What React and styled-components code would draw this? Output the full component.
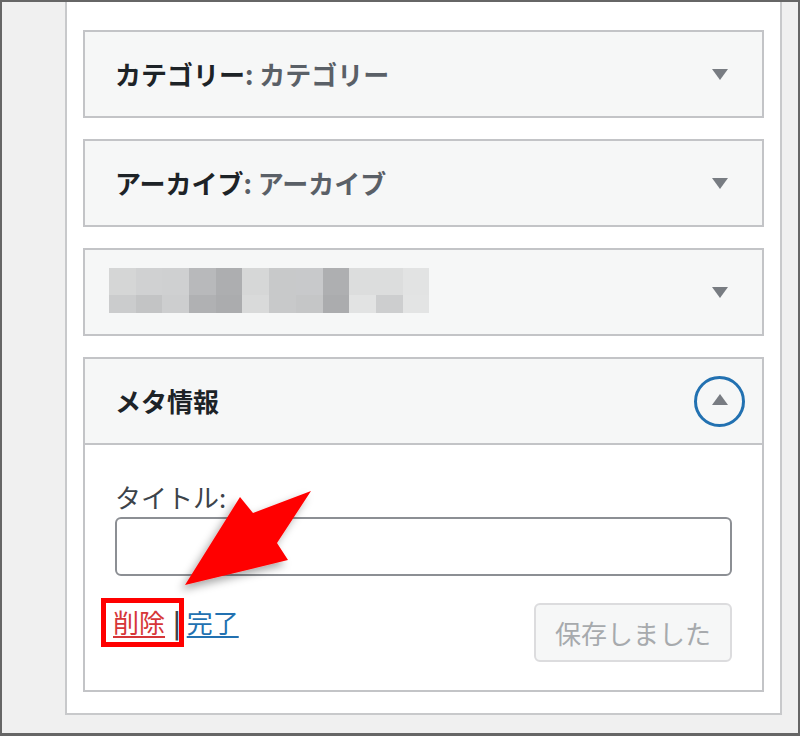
import styled, { createGlobalStyle } from "styled-components"

const Global = createGlobalStyle`
    html, body {
        margin: 0;
        padding: 0;
        background: #f0f0f0;
    }
    * {
        box-sizing: border-box;
    }
`

const blur = [
    ["#d5d6d6", "#d0d1d2", "#cfd0d1", "#b8b9bb", "#adaeb0", "#d6d7d7", "#c8c9ca", "#c8c9cb", "#aeafb1", "#dcdddd", "#dcdddd", "#e2e3e3"],
    ["#cbcccd", "#c3c4c5", "#cdcecf", "#b0b1b3", "#abacae", "#d9dada", "#c8c9ca", "#c5c6c7", "#abacae", "#e2e3e3", "#cdcecf", "#e3e4e4"],
]

function Widget ({ title, inTitle, children }) {
    return (
        <WidgetBox>
            <WidgetTop>
                {children || (
                    <Title>
                        {title}
                        <InTitle>{inTitle}</InTitle>
                    </Title>
                )}
                <Toggle>
                    <Arrow />
                </Toggle>
            </WidgetTop>
        </WidgetBox>
    )
}

export default function App () {
    return (
        <Frame>
            <Global />
            <Panel>
                <Widget title="カテゴリー" inTitle=": カテゴリー" />
                <Widget title="アーカイブ" inTitle=": アーカイブ" />
                <Widget>
                    <Mosaic>
                        {blur.flat().map((c, i) => (
                            <Cell key={i} $c={c} />
                        ))}
                    </Mosaic>
                </Widget>
                <WidgetBox $last>
                    <WidgetTop>
                        <Title>メタ情報</Title>
                        <Toggle $open>
                            <Arrow $up />
                        </Toggle>
                    </WidgetTop>
                    <WidgetInside>
                        <Label>タイトル:</Label>
                        <Input type="text" />
                        <Actions>
                            <Links>
                                <Delete href="#">削除</Delete>
                                <Sep>|</Sep>
                                <Done href="#">完了</Done>
                            </Links>
                            <SaveButton disabled>保存しました</SaveButton>
                        </Actions>
                    </WidgetInside>
                </WidgetBox>
            </Panel>
            <Highlight />
            <Pointer viewBox="0 0 800 736" width="800" height="736">
                <defs>
                    <filter id="sh" x="-30%" y="-30%" width="160%" height="160%">
                        <feDropShadow dx="-4" dy="5" stdDeviation="4" floodColor="#000" floodOpacity="0.35" />
                    </filter>
                </defs>
                <polygon
                    points="311,491 277,543 288,560 185,585 240,497 253,513"
                    fill="#ff0000"
                    filter="url(#sh)"
                />
            </Pointer>
        </Frame>
    )
}

const Frame = styled.div`
    position: relative;
    width: 800px;
    height: 736px;
    overflow: hidden;
    background: #f0f0f0;
    border: 2px solid #666;
    border-bottom-width: 3px;
    font-family: "Noto Sans CJK JP", "Noto Sans", sans-serif;
`

const Panel = styled.div`
    margin-left: 63px;
    width: 717px;
    height: 713px;
    background: #fff;
    border: 2px solid #c8c9cb;
    border-top: none;
    padding: 28px 16px 0;
`

const WidgetBox = styled.div`
    margin-bottom: ${p => (p.$last ? "0" : "21px")};
`

const WidgetTop = styled.div`
    height: 88px;
    display: flex;
    align-items: center;
    justify-content: space-between;
    padding: 0 17px 0 24px;
    background: #f6f7f7;
    border: 2px solid #c3c4c7;
`

const Title = styled.h3`
    margin: 0 0 0 6px;
    font-size: 26px;
    font-weight: 700;
    line-height: 36px;
    color: #1d2327;
`

const InTitle = styled.span`
    font-weight: 700;
    color: #5a6067;
`

const Toggle = styled.div`
    width: 51px;
    height: 51px;
    border-radius: 50%;
    display: flex;
    align-items: center;
    justify-content: center;
    border: 3px solid ${p => (p.$open ? "#2271b1" : "transparent")};
`

const Arrow = styled.span`
    width: 0;
    height: 0;
    border-left: 8px solid transparent;
    border-right: 8px solid transparent;
    ${p => (p.$up
        ? "border-bottom: 11px solid #787c82; margin-top: -3px;"
        : "border-top: 11px solid #787c82; margin-top: 1px;")}
`

const Mosaic = styled.div`
    display: grid;
    grid-template-columns: repeat(12, 26.7px);
    grid-template-rows: 27px 18px;
    margin-top: -4px;
`

const Cell = styled.div`
    background: ${p => p.$c};
`

const WidgetInside = styled.div`
    padding: 34px 30px 28px;
    border: 2px solid #c3c4c7;
    border-top: none;
`

const Label = styled.label`
    display: block;
    font-size: 26px;
    line-height: 35px;
    color: #3c434a;
`

const Input = styled.input`
    display: block;
    width: 100%;
    height: 59px;
    margin-top: 3px;
    border: 2px solid #8c8f94;
    border-radius: 6px;
    background: #fff;
    outline: none;
`

const Actions = styled.div`
    display: flex;
    justify-content: space-between;
    align-items: flex-start;
    margin-top: 27px;
`

const Links = styled.div`
    display: flex;
    align-items: center;
    font-size: 26px;
    line-height: 38px;
    margin-left: -2px;
`

const Delete = styled.a`
    color: #d63638;
    text-decoration: underline;
    text-decoration-thickness: 2px;
    text-underline-offset: 3px;
`

const Done = styled.a`
    color: #2271b1;
    text-decoration: underline;
    text-decoration-thickness: 2px;
    text-underline-offset: 3px;
`

const Sep = styled.span`
    color: #3c434a;
    font-weight: 700;
    margin: 0 6px 0 8px;
`

const SaveButton = styled.button`
    width: 198px;
    height: 59px;
    border: 2px solid #dcdcde;
    border-radius: 6px;
    background: #f6f7f7;
    color: #a7aaad;
    font-family: "Noto Sans CJK JP", "Noto Sans", sans-serif;
    font-size: 26px;
    padding: 0;
`

const Highlight = styled.div`
    position: absolute;
    left: 99px;
    top: 596px;
    width: 83px;
    height: 49px;
    border: 5px solid #ff0000;
    pointer-events: none;
`

const Pointer = styled.svg`
    position: absolute;
    left: -2px;
    top: -2px;
    pointer-events: none;
`
